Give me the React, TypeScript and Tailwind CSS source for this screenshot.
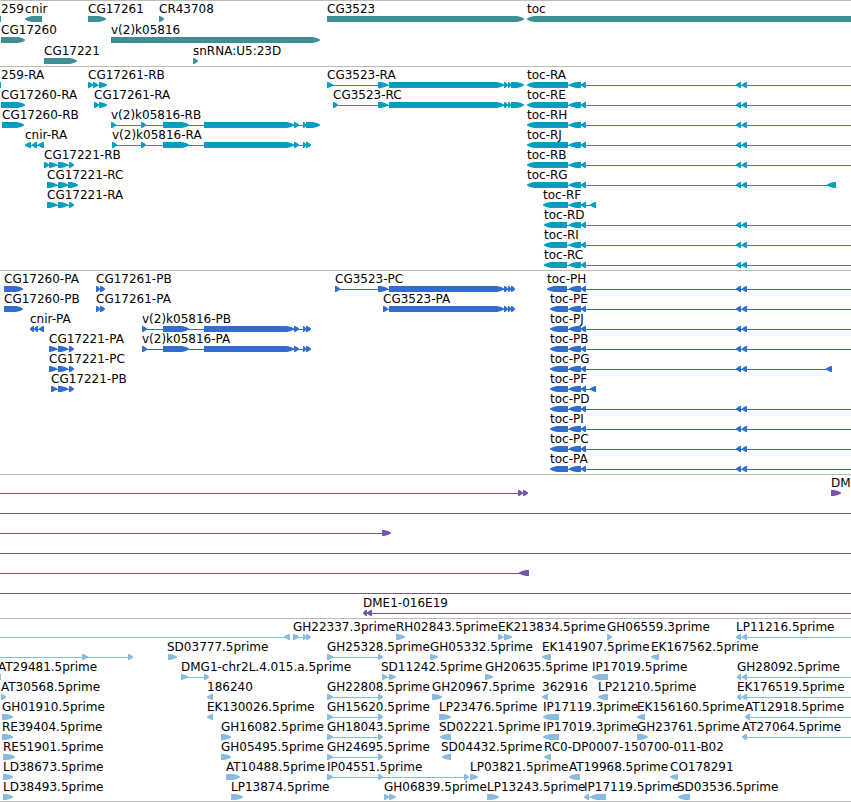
import React from "react";

type Dir = "right" | "left";

type Feature = {
  name: string;
  x: number;
  exons: number[][];
  dir?: Dir;
  // the feature runs on past the left / right side of the window
  fromEdge?: boolean;
  toEdge?: boolean;
};

type TrackData = {
  title: string;
  color: string;
  spaced?: boolean;
  rows: Feature[][];
};

const right = (name: string, x: number, exons: number[][]): Feature => ({
  name,
  x,
  exons,
});

const left = (
  name: string,
  x: number,
  exons: number[][],
  toEdge = false
): Feature => ({ name, x, exons, dir: "left", toEdge });

const toc = (name: string, x: number, firstEnd: number, last?: number[]) =>
  left(
    name,
    x,
    [
      [x, firstEnd],
      [569, 581],
      [581, 586],
      [736, 741],
      [742, 747],
      ...(last ? [last] : []),
    ],
    !last
  );

const tocShort = (name: string, x: number) =>
  left(name, x, [
    [x, 568],
    [569, 581],
    [581, 586],
    [590, 596],
  ]);

const cg3523Body = [
  [389, 504],
  [504, 508],
  [508, 511],
];

const vk05816Body = [
  [163, 189],
  [204, 294],
  [294, 299],
  [303, 306],
];

const cdna = (name: string) =>
  right(name, 327, [
    [327, 333],
    [378, 383],
  ]);

const tracks: TrackData[] = [
  {
    title: "Genes",
    color: "text-[#3f8f95]",
    spaced: true,
    rows: [
      [
        right("259", 1, [[0, 1]]),
        left("cnir", 25, [[25, 42]]),
        right("CG17261", 88, [[88, 106]]),
        right("CR43708", 159, [[159, 164]]),
        right("CG3523", 327, [[327, 524]]),
        left("toc", 527, [[527, 4000]]),
      ],
      [
        right("CG17260", 1, [[1, 25]]),
        right("v(2)k05816", 111, [[111, 320]]),
      ],
      [
        right("CG17221", 44, [[44, 77]]),
        right("snRNA:U5:23D", 193, [[193, 198]]),
      ],
    ],
  },
  {
    title: "Transcripts",
    color: "text-[#009fc1]",
    rows: [
      [
        right("259-RA", 1, [[0, 1]]),
        right("CG17261-RB", 88, [[88, 93], [93, 98], [99, 107]]),
        right("CG3523-RA", 327, [[327, 333], [378, 388], ...cg3523Body, [511, 524]]),
        toc("toc-RA", 527, 568),
      ],
      [
        right("CG17260-RA", 1, [[1, 25]]),
        right("CG17261-RA", 94, [[94, 99], [99, 107]]),
        right("CG3523-RC", 333, [[333, 338], [378, 388], ...cg3523Body, [511, 524]]),
        toc("toc-RE", 527, 568),
      ],
      [
        right("CG17260-RB", 2, [[2, 24]]),
        right("v(2)k05816-RB", 111, [[111, 116], [141, 146], ...vk05816Body, [306, 320]]),
        toc("toc-RH", 527, 568),
      ],
      [
        left("cnir-RA", 25, [[25, 31], [32, 37], [38, 44]]),
        right("v(2)k05816-RA", 112, [[112, 117], [141, 146], ...vk05816Body, [306, 311]]),
        toc("toc-RJ", 527, 568),
      ],
      [
        right("CG17221-RB", 44, [[44, 49], [49, 57], [58, 68], [69, 74]]),
        toc("toc-RB", 527, 568),
      ],
      [
        right("CG17221-RC", 47, [[47, 57], [58, 68], [68, 78]]),
        toc("toc-RG", 527, 568, [827, 836]),
      ],
      [
        right("CG17221-RA", 47, [[47, 57], [58, 68], [69, 74]]),
        tocShort("toc-RF", 543),
      ],
      [toc("toc-RD", 544, 567)],
      [toc("toc-RI", 544, 567)],
      [toc("toc-RC", 544, 567)],
    ],
  },
  {
    title: "Proteins",
    color: "text-[#306dce]",
    rows: [
      [
        right("CG17260-PA", 4, [[4, 23]]),
        right("CG17261-PB", 96, [[96, 100], [100, 105]]),
        right("CG3523-PC", 335, [[335, 340], [378, 388], ...cg3523Body, [511, 515]]),
        toc("toc-PH", 547, 567),
      ],
      [
        right("CG17260-PB", 4, [[4, 23]]),
        right("CG17261-PA", 96, [[96, 100], [100, 105]]),
        right("CG3523-PA", 383, [[383, 388], ...cg3523Body, [511, 515]]),
        toc("toc-PE", 550, 568),
      ],
      [
        left("cnir-PA", 30, [[30, 34], [34, 38], [39, 44]]),
        right("v(2)k05816-PB", 142, [[142, 147], ...vk05816Body, [306, 311]]),
        toc("toc-PJ", 550, 568),
      ],
      [
        right("CG17221-PA", 49, [[49, 57], [58, 68], [69, 74]]),
        right("v(2)k05816-PA", 142, [[142, 147], ...vk05816Body, [306, 311]]),
        toc("toc-PB", 550, 568),
      ],
      [
        right("CG17221-PC", 49, [[49, 57], [58, 68], [69, 74]]),
        toc("toc-PG", 550, 568, [826, 832]),
      ],
      [
        right("CG17221-PB", 51, [[51, 57], [58, 68], [69, 74]]),
        tocShort("toc-PF", 550),
      ],
      [toc("toc-PD", 550, 568)],
      [toc("toc-PI", 550, 568)],
      [toc("toc-PC", 550, 568)],
      [toc("toc-PA", 550, 568)],
    ],
  },
  {
    title: "BAC ends",
    color: "text-[#7556a8]",
    rows: [
      [
        { name: "", x: 0, exons: [[518, 523], [523, 528]], fromEdge: true },
        right("DM", 831, [[831, 841]]),
      ],
      [{ name: "", x: 0, exons: [], fromEdge: true, toEdge: true }],
      [{ name: "", x: 0, exons: [[382, 391]], fromEdge: true }],
      [{ name: "", x: 0, exons: [], fromEdge: true, toEdge: true }],
      [{ name: "", x: 0, exons: [[519, 529]], dir: "left", fromEdge: true }],
      [{ name: "", x: 0, exons: [], fromEdge: true, toEdge: true }],
      [left("DME1-016E19", 363, [[363, 367], [367, 372]], true)],
    ],
  },
  {
    title: "cDNA and EST",
    color: "text-[#88bbdd]",
    rows: [
      [
        { name: "", x: 0, exons: [[284, 290]], dir: "left", fromEdge: true },
        right("GH22337.3prime", 293, [[293, 299], [303, 306], [306, 311]]),
        right("RH02843.5prime", 396, [[396, 405]]),
        right("EK213834.5prime", 498, [[498, 503], [504, 512]]),
        right("GH06559.3prime", 607, [[607, 612]]),
        left("LP11216.5prime", 736, [[736, 741], [742, 747]], true),
      ],
      [
        { name: "", x: 0, exons: [[82, 88], [128, 133]], fromEdge: true },
        right("SD03777.5prime", 167, [[168, 177]]),
        cdna("GH25328.5prime"),
        right("GH05332.5prime", 430, [[430, 438]]),
        left("EK141907.5prime", 542, [[542, 551]]),
        left("EK167562.5prime", 651, [[651, 659]]),
      ],
      [
        right("AT29481.5prime", -2, [[0, 1]]),
        right("DMG1-chr2L.4.015.a.5prime", 181, [[181, 188], [204, 209]]),
        right("SD11242.5prime", 381, [[382, 387], [389, 396]]),
        right("GH20635.5prime", 485, [[485, 493]]),
        left("IP17019.5prime", 592, [[592, 608]]),
        left("GH28092.5prime", 737, [[737, 741], [742, 747]], true),
      ],
      [
        right("AT30568.5prime", 1, [[1, 6]]),
        left("186240", 207, [[207, 213]]),
        cdna("GH22808.5prime"),
        right("GH20967.5prime", 432, [[432, 442]]),
        left("362916", 542, [[542, 548]]),
        left("LP21210.5prime", 598, [[598, 608]]),
        left("EK176519.5prime", 737, [[737, 741], [742, 747]], true),
      ],
      [
        right("GH01910.5prime", 2, [[2, 13]]),
        left("EK130026.5prime", 207, [[207, 213]]),
        cdna("GH15620.5prime"),
        right("LP23476.5prime", 439, [[439, 451]]),
        left("IP17119.3prime", 543, [[543, 559]]),
        left("EK156160.5prime", 637, [[637, 645]]),
        left("AT12918.5prime", 745, [[745, 750]], true),
      ],
      [
        right("RE39404.5prime", 2, [[2, 13]]),
        right("GH16082.5prime", 221, [[221, 231]]),
        cdna("GH18043.5prime"),
        left("SD02221.5prime", 439, [[440, 451]]),
        left("IP17019.3prime", 543, [[543, 559]]),
        right("GH23761.5prime", 637, [[637, 648]]),
        left("AT27064.5prime", 742, [[742, 747]], true),
      ],
      [
        right("RE51901.5prime", 3, [[3, 15]]),
        right("GH05495.5prime", 221, [[221, 231]]),
        cdna("GH24695.5prime"),
        left("SD04432.5prime", 441, [[442, 451]]),
        left("RC0-DP0007-150700-011-B02", 544, [[544, 551]]),
      ],
      [
        right("LD38673.5prime", 3, [[3, 13]]),
        right("AT10488.5prime", 226, [[226, 240]]),
        right("IP04551.5prime", 327, [[327, 333], [378, 383], [464, 469]]),
        right("LP03821.5prime", 470, [[470, 478]]),
        left("AT19968.5prime", 569, [[569, 580]]),
        left("CO178291", 670, [[670, 678]]),
      ],
      [
        right("LD38493.5prime", 3, [[3, 13]]),
        right("LP13874.5prime", 231, [[231, 243]]),
        right("GH06839.5prime", 384, [[384, 389], [389, 396]]),
        right("LP13243.5prime", 487, [[487, 499]]),
        left("IP17119.5prime", 584, [[584, 589], [590, 606]]),
        left("SD03536.5prime", 677, [[678, 690]]),
      ],
    ],
  },
];

// block with a pointed end, 6px high
const exonPoints = (start: number, end: number, dir: Dir) => {
  const width = end - start;
  if (width < 2) return `${start},0 ${end},0 ${end},6 ${start},6`;
  const head = Math.min(width - 1, 7);
  const [base, tip, s] = dir === "left" ? [end, start, -1] : [start, end, 1];
  const neck = tip - head * s;
  const bevel = tip - Math.min(3, head / 2) * s;
  return `${base},0 ${neck},0 ${bevel},1 ${tip},2.5 ${tip},3.5 ${bevel},5 ${neck},6 ${base},6`;
};

const Glyph = ({ feature }: { feature: Feature }) => {
  const { exons, dir = "right", fromEdge, toEdge } = feature;
  const x1 = fromEdge ? 0 : exons[0][0] + 2;
  const x2 = toEdge ? "100%" : exons[exons.length - 1][1] - 2;
  const hasLine = fromEdge || toEdge || exons.length > 1;

  return (
    <g>
      {hasLine && (
        <line x1={x1} x2={x2} y1={3.5} y2={3.5} stroke="currentColor" />
      )}
      {exons.map(([start, end]) => (
        <polygon key={start} points={exonPoints(start, end, dir)} />
      ))}
    </g>
  );
};

const Row = ({ features }: { features: Feature[] }) => (
  <li>
    <div className="relative h-3.5 text-black">
      {features
        .filter((f) => f.name)
        .map((f) => (
          <span
            key={f.name}
            className="absolute top-0 whitespace-nowrap"
            style={{ left: f.x }}
          >
            {f.name}
          </span>
        ))}
    </div>
    <svg className="block h-1.5 w-full" fill="currentColor" aria-hidden="true">
      {features.map((f, i) => (
        <Glyph key={i} feature={f} />
      ))}
    </svg>
  </li>
);

const Track = ({ track }: { track: TrackData }) => (
  <section
    aria-label={track.title}
    className={`border-t border-[#bbbbbb] pt-px pb-0.5 last:border-b last:pb-px ${track.color}`}
  >
    <ul className={`flex flex-col ${track.spaced ? "gap-px" : ""}`}>
      {track.rows.map((features, i) => (
        <Row key={i} features={features} />
      ))}
    </ul>
  </section>
);

const App = () => {
  return (
    <main className="w-full overflow-hidden bg-white font-['DejaVu_Sans',sans-serif] text-[12px] leading-[14px]">
      {tracks.map((track) => (
        <Track key={track.title} track={track} />
      ))}
    </main>
  );
};

export default App;
